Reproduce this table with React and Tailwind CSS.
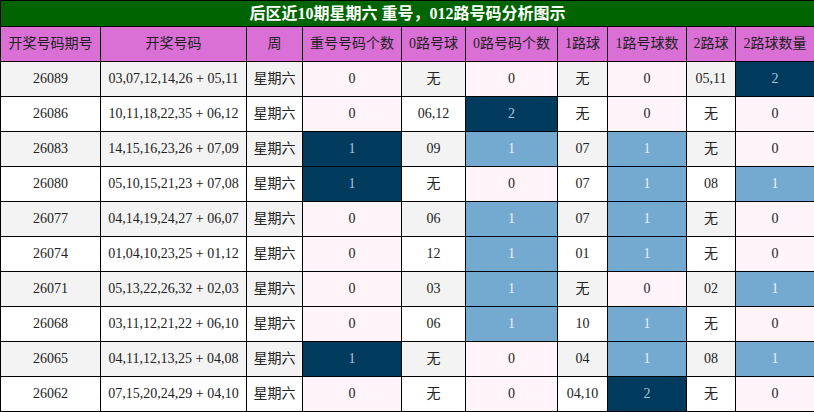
import React from 'react'

const rows = [
  ['26089', '03,07,12,14,26 + 05,11', '0', '无', '0', '无', '0', '05,11', '2'],
  ['26086', '10,11,18,22,35 + 06,12', '0', '06,12', '2', '无', '0', '无', '0'],
  ['26083', '14,15,16,23,26 + 07,09', '1', '09', '1', '07', '1', '无', '0'],
  ['26080', '05,10,15,21,23 + 07,08', '1', '无', '0', '07', '1', '08', '1'],
  ['26077', '04,14,19,24,27 + 06,07', '0', '06', '1', '07', '1', '无', '0'],
  ['26074', '01,04,10,23,25 + 01,12', '0', '12', '1', '01', '1', '无', '0'],
  ['26071', '05,13,22,26,32 + 02,03', '0', '03', '1', '无', '0', '02', '1'],
  ['26068', '03,11,12,21,22 + 06,10', '0', '06', '1', '10', '1', '无', '0'],
  ['26065', '04,11,12,13,25 + 04,08', '1', '无', '0', '04', '1', '08', '1'],
  ['26062', '07,15,20,24,29 + 04,10', '0', '无', '0', '04,10', '2', '无', '0'],
]

const headers = ['开奖号码期号', '开奖号码', '周', '重号号码个数', '0路号球', '0路号码个数', '1路球', '1路号球数', '2路球', '2路球数量']
const widths = ['w-[100px]', 'w-[146px]', 'w-[56px]', 'w-[99px]', 'w-[64px]', 'w-[92px]', 'w-[50px]', 'w-[79px]', 'w-[49px]', 'w-[79px]']

// count cell colour: 2 (or 1 in 重号) dark, 1 light blue, else pink
function countClass(v, isRepeat) {
  if (v === '2' || (isRepeat && v === '1')) return 'bg-[#003a5c] text-[#a9c6dc]'
  if (v === '1') return 'bg-[#74a9d0] text-[#e8f1f8]'
  return 'bg-[#fff4fa] text-[#222]'
}

export default function App() {
  return (
    <div className="w-[814px] h-[412px] bg-white" style={{ fontFamily: '"Liberation Serif", "Noto Sans CJK SC", serif' }}>
      <table className="w-[814px] table-fixed border-collapse">
        <colgroup>
          {widths.map((w, i) => <col key={i} className={w} />)}
        </colgroup>
        <tbody>
          <tr className="h-[26px]">
            <td colSpan={10} className="border border-black bg-[#006400] text-white text-[16px] font-bold text-center leading-none">
              后区近10期星期六 重号，012路号码分析图示
            </td>
          </tr>
          <tr className="h-[35px]">
            {headers.map((h, i) => (
              <td key={i} className="border border-black bg-[#da70d6] text-[#222] text-[14px] text-center leading-none">{h}</td>
            ))}
          </tr>
          {rows.map((r, idx) => {
            const base = idx % 2 === 0 ? 'bg-[#f3f3f3]' : 'bg-white'
            return (
              <tr key={r[0]} className="h-[35px] text-[14px] text-center leading-none">
                <td className={`border border-black text-[#222] ${base}`}>{r[0]}</td>
                <td className={`border border-black text-[#222] ${base}`}>{r[1]}</td>
                <td className={`border border-black text-[#222] ${base}`}>星期六</td>
                <td className={`border border-black ${countClass(r[2], true)}`}>{r[2]}</td>
                <td className={`border border-black text-[#222] ${base}`}>{r[3]}</td>
                <td className={`border border-black ${countClass(r[4])}`}>{r[4]}</td>
                <td className={`border border-black text-[#222] ${base}`}>{r[5]}</td>
                <td className={`border border-black ${countClass(r[6])}`}>{r[6]}</td>
                <td className={`border border-black text-[#222] ${base}`}>{r[7]}</td>
                <td className={`border border-black ${countClass(r[8])}`}>{r[8]}</td>
              </tr>
            )
          })}
        </tbody>
      </table>
    </div>
  )
}
